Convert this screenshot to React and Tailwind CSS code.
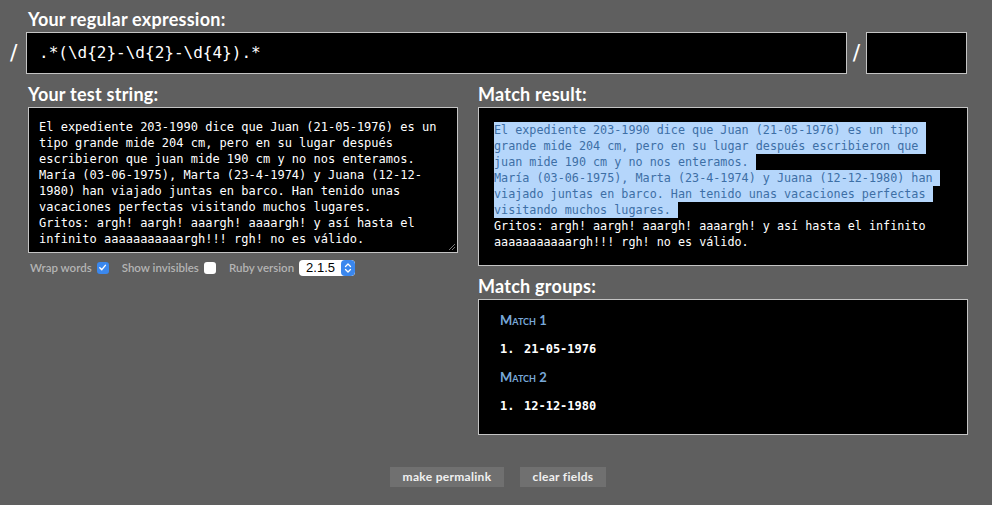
import React from 'react';

const heading = "font-['Lato',sans-serif] font-bold text-[18px] leading-[20px] text-white tracking-[0.25px]";
const mono = "font-['DejaVu_Sans_Mono',monospace]";

const testLines = [
  'El expediente 203-1990 dice que Juan (21-05-1976) es un',
  'tipo grande mide 204 cm, pero en su lugar después',
  'escribieron que juan mide 190 cm y no nos enteramos.',
  'María (03-06-1975), Marta (23-4-1974) y Juana (12-12-',
  '1980) han viajado juntas en barco. Han tenido unas',
  'vacaciones perfectas visitando muchos lugares.',
  'Gritos: argh! aargh! aaargh! aaaargh! y así hasta el',
  'infinito aaaaaaaaaaargh!!! rgh! no es válido.',
];

const matched = [
  'El expediente 203-1990 dice que Juan (21-05-1976) es un tipo ',
  'grande mide 204 cm, pero en su lugar después escribieron que ',
  'juan mide 190 cm y no nos enteramos. ',
  'María (03-06-1975), Marta (23-4-1974) y Juana (12-12-1980) han ',
  'viajado juntas en barco. Han tenido unas vacaciones perfectas ',
  'visitando muchos lugares. ',
];

const rest = [
  'Gritos: argh! aargh! aaargh! aaaargh! y así hasta el infinito',
  'aaaaaaaaaaargh!!! rgh! no es válido.',
];

const groups = [
  { label: 'Match 1', value: '21-05-1976' },
  { label: 'Match 2', value: '12-12-1980' },
];

const Checkbox = ({ checked }) => (
  checked ? (
    <span className="block w-[12px] h-[12px] rounded-[3px] bg-[#3b88ee] flex items-center justify-center">
      <svg width="9" height="9" viewBox="0 0 10 10">
        <path d="M2 5.2 L4.2 7.4 L8.2 2.6" fill="none" stroke="#fff" strokeWidth="1.6" strokeLinecap="round" strokeLinejoin="round" />
      </svg>
    </span>
  ) : (
    <span className="block w-[12px] h-[12px] rounded-[3px] bg-white" />
  )
);

const App = () => {
  return (
    <div className="w-[992px] h-[505px] bg-[#5f5f5f] overflow-hidden pt-[9px]">
      {/* Regex row */}
      <div className="pl-[28px]">
        <h2 className={heading}>Your regular expression:</h2>
      </div>
      <div className="flex items-center mt-[3px] pl-[10px]">
        <span className="w-[16px] text-white text-[22px] leading-none font-['DejaVu_Sans',sans-serif]">/</span>
        <div className="w-[821px] h-[42px] bg-black border border-[#c4c4c4] flex items-center pl-[12px]">
          <span className={`${mono} text-[16px] text-white`}>.*(\d{'{'}2{'}'}-\d{'{'}2{'}'}-\d{'{'}4{'}'}).*</span>
        </div>
        <span className="w-[19px] text-center text-white text-[22px] leading-none font-['DejaVu_Sans',sans-serif]">/</span>
        <div className="w-[101px] h-[42px] bg-black border border-[#c4c4c4]" />
      </div>

      {/* Two columns */}
      <div className="flex gap-[20px] pl-[28px] mt-[10px]">
        <div className="w-[430px]">
          <h2 className={heading}>Your test string:</h2>
          <div className={`mt-[3px] h-[146px] bg-black border border-[#c4c4c4] pl-[10px] pt-[11px] ${mono} text-[12px] leading-[16px] text-white relative`}>
            {testLines.map((l, i) => (
              <div key={i} className="whitespace-pre">{l}</div>
            ))}
            <svg className="absolute right-[1px] bottom-[1px]" width="8" height="8" viewBox="0 0 8 8">
              <path d="M7 1 L1 7 M7 4 L4 7" stroke="#777" strokeWidth="1" />
            </svg>
          </div>
          <div className="flex items-center mt-[6px] pl-[2px] font-['Lato',sans-serif] font-semibold text-[11.5px] text-[#b4b4b4]">
            <span>Wrap words</span>
            <span className="ml-[5px]"><Checkbox checked /></span>
            <span className="ml-[13px]">Show invisibles</span>
            <span className="ml-[5px]"><Checkbox /></span>
            <span className="ml-[13px]">Ruby version</span>
            <div className="ml-[5px] w-[56px] h-[16px] bg-white rounded-[4px] flex items-center overflow-hidden">
              <span className="flex-1 pl-[7px] text-[13px] leading-none text-black font-['Liberation_Sans',sans-serif] font-normal">2.1.5</span>
              <span className="w-[14px] h-full bg-[#3a87ee] rounded-[4px] flex items-center justify-center">
                <svg width="8" height="12" viewBox="0 0 8 12">
                  <path d="M1.5 4.5 L4 2 L6.5 4.5 M1.5 7.5 L4 10 L6.5 7.5" fill="none" stroke="#fff" strokeWidth="1.3" strokeLinecap="round" strokeLinejoin="round" />
                </svg>
              </span>
            </div>
          </div>
        </div>

        <div className="w-[490px]">
          <h2 className={heading}>Match result:</h2>
          <div className={`mt-[3px] h-[159px] bg-black border border-[#c4c4c4] pl-[15px] pt-[14px] ${mono} text-[11.75px] leading-[16px]`}>
            {matched.map((l, i) => (
              <div key={i} className="whitespace-pre">
                <span className="bg-[#b5d6fb] text-[#3d6fa6] leading-[16px] inline-block">{l}</span>
              </div>
            ))}
            {rest.map((l, i) => (
              <div key={i} className="whitespace-pre text-white">{l}</div>
            ))}
          </div>

          <h2 className={`${heading} mt-[10px]`}>Match groups:</h2>
          <div className="mt-[3px] h-[136px] bg-black border border-[#c4c4c4] pl-[21px] pt-[12px]">
            {groups.map((g, i) => (
              <div key={i} className={i > 0 ? 'mt-[12px]' : ''}>
                <div className="font-['Lato',sans-serif] font-bold text-[13px] leading-[16px] text-[#78a8d8] [font-variant:small-caps]">{g.label}</div>
                <div className={`${mono} font-bold text-[12px] leading-[16px] text-white mt-[13px] flex`}>
                  <span className="w-[24px]">1.</span>
                  <span>{g.value}</span>
                </div>
              </div>
            ))}
          </div>
        </div>
      </div>

      {/* Buttons */}
      <div className="flex justify-center gap-[16px] mt-[32px] pl-[4px]">
        <button className="w-[114px] h-[20px] bg-[#707070] text-[#f0f0f0] font-['Lato',sans-serif] font-bold text-[12px] leading-none tracking-[0.3px]">make permalink</button>
        <button className="w-[86px] h-[20px] bg-[#707070] text-[#f0f0f0] font-['Lato',sans-serif] font-bold text-[12px] leading-none tracking-[0.3px]">clear fields</button>
      </div>
    </div>
  );
};

export default App;
